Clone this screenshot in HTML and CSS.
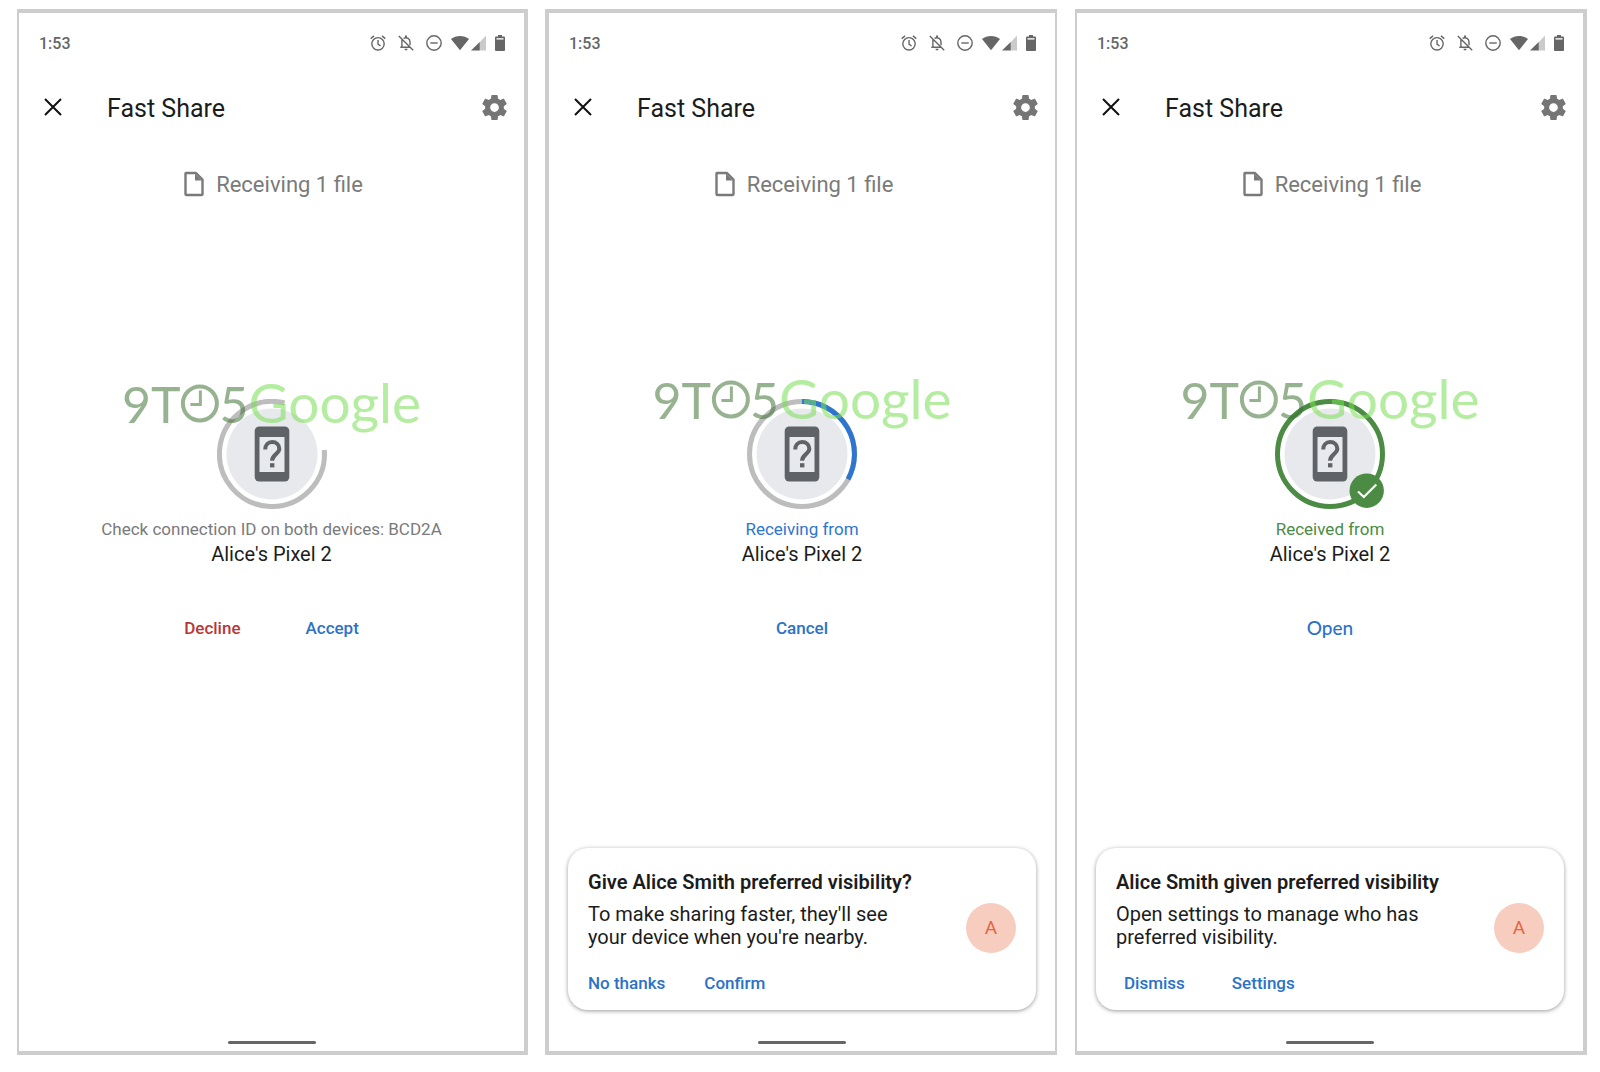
FILE: index.html
```html
<!DOCTYPE html>
<html lang="en">
<head>
<meta charset="utf-8">
<meta name="viewport" content="width=device-width, initial-scale=1">
<title>Fast Share</title>
<link rel="stylesheet" href="styles.css">
</head>
<body>
<svg class="sprite" aria-hidden="true">
  <symbol id="i-alarm" viewBox="0 0 16 16"><g fill="none" stroke="currentColor" stroke-width="1.4"><circle cx="8" cy="8.8" r="6.2"/><path d="M8 5v4.2l2.6 1.8M.7 3.6 4 .9M15.3 3.6 12 .9"/></g></symbol>
  <symbol id="i-bell-off" viewBox="0 0 16 16"><g fill="none" stroke="currentColor" stroke-width="1.4"><path d="M.8.9 15.2 15.3M3.900 4.800v7.500h8.200M2.300 12.300h10M5.600 3.400C9 1.600 12 3.800 12 7v3.200"/></g><path fill="currentColor" d="M7 .4h2v2.200H7zM6.400 13.800h3.200a1.600 1.600 0 0 1-3.200 0z"/></symbol>
  <symbol id="i-dnd" viewBox="0 0 16 16"><g fill="none" stroke="currentColor" stroke-width="1.400"><circle cx="8" cy="8" r="7.200"/><path d="M4.300 8h7.400"/></g></symbol>
  <symbol id="i-wifi" viewBox="0 0 18 16"><path fill="currentColor" d="M0 3.900C5 0 13 0 18 3.900L9 15.200z"/></symbol>
  <symbol id="i-signal" viewBox="0 0 15 16"><path fill="currentColor" opacity=".35" d="M15 .6v15H8v-7.600z"/><path fill="currentColor" d="M8.700 7v8.600H0z"/></symbol>
  <symbol id="i-battery" viewBox="0 0 10 16"><path fill="currentColor" d="M3 0h4v1.400H3zM1 1.400h8a1 1 0 0 1 1 1V15a1 1 0 0 1-1 1H1a1 1 0 0 1-1-1V2.400a1 1 0 0 1 1-1z"/><path fill="#ddd" d="M1.500 3h7v1.700h-7z"/></symbol>
  <symbol id="i-close" viewBox="0 0 24 24"><path fill="none" stroke="currentColor" stroke-width="2" d="M4 4l16 16M20 4 4 20"/></symbol>
  <symbol id="i-gear" viewBox="2 2 20 20"><path fill="currentColor" d="M19.430 12.980c.04-.32.07-.64.07-.98s-.03-.66-.07-.98l2.110-1.650c.19-.15.24-.42.12-.64l-2-3.460c-.12-.22-.39-.3-.61-.22l-2.490 1c-.52-.4-1.080-.73-1.690-.98l-.38-2.650C14.460 2.180 14.250 2 14 2h-4c-.25 0-.46.18-.49.42l-.38 2.650c-.61.25-1.170.59-1.690.98l-2.490-1c-.23-.09-.49 0-.61.22l-2 3.460c-.13.22-.07.49.12.64l2.110 1.650c-.04.32-.07.65-.07.98s.03.66.07.98l-2.110 1.650c-.19.15-.24.42-.12.64l2 3.460c.12.22.39.3.61.22l2.490-1c.52.4 1.080.73 1.690.98l.38 2.650c.03.24.24.42.49.42h4c.25 0 .46-.18.49-.42l.38-2.650c.61-.25 1.170-.59 1.690-.98l2.490 1c.23.09.49 0 .61-.22l2-3.460c.12-.22.07-.49-.12-.64l-2.110-1.650zM12 15.500c-1.930 0-3.500-1.570-3.500-3.500s1.570-3.500 3.500-3.500 3.500 1.570 3.500 3.500-1.570 3.500-3.500 3.500z"/></symbol>
  <symbol id="i-file" viewBox="0 0 26 26"><path fill="none" stroke="currentColor" stroke-width="2.400" stroke-linejoin="round" d="M6 2h10L22.500 8.500V23a1 1 0 0 1-1 1H6.500a1 1 0 0 1-1-1V2.500a.5.500 0 0 1 .5-.5z"/><path fill="currentColor" d="M15 2.500V9.500H22z"/></symbol>
  <symbol id="i-device" viewBox="0 0 110 110"><circle cx="55" cy="55" r="45.500" fill="#e8e9ed"/><rect x="37.700" y="27.500" width="34.600" height="55" rx="4.500" fill="#5f6367"/><path fill="#e8e9ed" d="M42.500 38h25v35h-25z"/><path fill="none" stroke="#5f6367" stroke-width="4" d="M48.200 50.500c0-4.500 3-7.500 6.900-7.500 4.200 0 7.200 2.900 7.200 6.800 0 5.200-7.200 5.600-7.200 12"/><path fill="#5f6367" d="M53 64.200h4.400v4.200H53z"/></symbol>
  <symbol id="i-clock" viewBox="0 0 39 39"><g fill="none" stroke="currentColor" stroke-width="4"><circle cx="19.500" cy="19.500" r="17"/><path stroke-width="3" d="M20 6.500V20.500H10"/></g></symbol>
</svg>

<main class="board">
  <section class="phone phone--first">
    <div class="status">
      <time>1:53</time>
      <div class="status__icons">
        <div class="status__alerts"><svg class="ic16"><use href="#i-alarm"/></svg><svg class="ic16"><use href="#i-bell-off"/></svg><svg class="ic16"><use href="#i-dnd"/></svg></div>
        <div class="status__radio"><svg class="ic-wifi"><use href="#i-wifi"/></svg><svg class="ic-signal"><use href="#i-signal"/></svg></div>
        <svg class="ic-battery"><use href="#i-battery"/></svg>
      </div>
    </div>
    <header class="bar">
      <button class="icon-btn" aria-label="Close"><svg class="ic-close"><use href="#i-close"/></svg></button>
      <h1>Fast Share</h1>
      <button class="icon-btn icon-btn--gear" aria-label="Settings"><svg class="ic-gear"><use href="#i-gear"/></svg></button>
    </header>
    <p class="summary"><svg class="ic-file"><use href="#i-file"/></svg>Receiving 1 file</p>
    <div class="device">
      <div class="avatar">
        <svg class="avatar__art" viewBox="0 0 110 110"><use href="#i-device"/><path fill="none" stroke="#bdbdbd" stroke-width="5" d="M107.300 51A52.500 52.500 0 1 1 67.600 4"/></svg>
        <div class="mark mark--low"><span class="mark__a">9T</span><svg class="mark__clock"><use href="#i-clock"/></svg><span class="mark__a">5</span><span class="mark__b">Google</span></div>
      </div>
      <p class="state">Check connection ID on both devices: BCD2A</p>
      <p class="name">Alice's Pixel 2</p>
      <div class="actions"><button class="text-btn text-btn--red">Decline</button><button class="text-btn">Accept</button></div>
    </div>
    <div class="home"></div>
  </section>

  <section class="phone phone--second">
    <div class="status">
      <time>1:53</time>
      <div class="status__icons">
        <div class="status__alerts"><svg class="ic16"><use href="#i-alarm"/></svg><svg class="ic16"><use href="#i-bell-off"/></svg><svg class="ic16"><use href="#i-dnd"/></svg></div>
        <div class="status__radio"><svg class="ic-wifi"><use href="#i-wifi"/></svg><svg class="ic-signal"><use href="#i-signal"/></svg></div>
        <svg class="ic-battery"><use href="#i-battery"/></svg>
      </div>
    </div>
    <header class="bar">
      <button class="icon-btn" aria-label="Close"><svg class="ic-close"><use href="#i-close"/></svg></button>
      <h1>Fast Share</h1>
      <button class="icon-btn icon-btn--gear" aria-label="Settings"><svg class="ic-gear"><use href="#i-gear"/></svg></button>
    </header>
    <p class="summary"><svg class="ic-file"><use href="#i-file"/></svg>Receiving 1 file</p>
    <div class="device">
      <div class="avatar">
        <svg class="avatar__art" viewBox="0 0 110 110"><use href="#i-device"/><circle cx="55" cy="55" r="52.500" fill="none" stroke="#bdbdbd" stroke-width="5"/><path fill="none" stroke="#2e75cf" stroke-width="5" d="M55 2.500A52.500 52.500 0 0 1 101 80.200"/></svg>
        <div class="mark"><span class="mark__a">9T</span><svg class="mark__clock"><use href="#i-clock"/></svg><span class="mark__a">5</span><span class="mark__b">Google</span></div>
      </div>
      <p class="state state--blue">Receiving from</p>
      <p class="name">Alice's Pixel 2</p>
      <div class="actions"><button class="text-btn">Cancel</button></div>
    </div>
    <article class="card">
      <h2>Give Alice Smith preferred visibility?</h2>
      <div class="card__body"><p>To make sharing faster, they'll see your device when you're nearby.</p><span class="initial">A</span></div>
      <div class="card__actions"><button class="text-btn">No thanks</button><button class="text-btn">Confirm</button></div>
    </article>
    <div class="home"></div>
  </section>

  <section class="phone phone--third">
    <div class="status">
      <time>1:53</time>
      <div class="status__icons">
        <div class="status__alerts"><svg class="ic16"><use href="#i-alarm"/></svg><svg class="ic16"><use href="#i-bell-off"/></svg><svg class="ic16"><use href="#i-dnd"/></svg></div>
        <div class="status__radio"><svg class="ic-wifi"><use href="#i-wifi"/></svg><svg class="ic-signal"><use href="#i-signal"/></svg></div>
        <svg class="ic-battery"><use href="#i-battery"/></svg>
      </div>
    </div>
    <header class="bar">
      <button class="icon-btn" aria-label="Close"><svg class="ic-close"><use href="#i-close"/></svg></button>
      <h1>Fast Share</h1>
      <button class="icon-btn icon-btn--gear" aria-label="Settings"><svg class="ic-gear"><use href="#i-gear"/></svg></button>
    </header>
    <p class="summary"><svg class="ic-file"><use href="#i-file"/></svg>Receiving 1 file</p>
    <div class="device">
      <div class="avatar">
        <svg class="avatar__art" viewBox="0 0 110 110"><use href="#i-device"/><circle cx="55" cy="55" r="52.500" fill="none" stroke="#4b8b43" stroke-width="5"/><circle cx="91.700" cy="91.700" r="17.200" fill="#4b8b43"/><path fill="none" stroke="#fff" stroke-width="2.200" d="M83 92.500l5.800 5.500 12.500-12.500"/></svg>
        <div class="mark"><span class="mark__a">9T</span><svg class="mark__clock"><use href="#i-clock"/></svg><span class="mark__a">5</span><span class="mark__b">Google</span></div>
      </div>
      <p class="state state--green">Received from</p>
      <p class="name">Alice's Pixel 2</p>
      <div class="actions"><button class="text-btn text-btn--open">Open</button></div>
    </div>
    <article class="card">
      <h2>Alice Smith given preferred visibility</h2>
      <div class="card__body"><p>Open settings to manage who has preferred visibility.</p><span class="initial">A</span></div>
      <div class="card__actions card__actions--inset"><button class="text-btn">Dismiss</button><button class="text-btn">Settings</button></div>
    </article>
    <div class="home"></div>
  </section>
</main>
</body>
</html>
```
FILE: styles.css
```css
* { box-sizing: border-box; }

body {
  margin: 0;
  background: #fff;
  color: #1c1c1c;
  font-family: Roboto, "Liberation Sans", sans-serif;
}

h1, h2, p { margin: 0; font-weight: 400; }
svg { display: block; flex: none; }
.sprite { position: absolute; width: 0; height: 0; }

button {
  margin: 0;
  padding: 0;
  border: 0;
  background: none;
  color: inherit;
  font: inherit;
  cursor: pointer;
}

.board {
  display: grid;
  grid-template-columns: 511fr 512fr 513fr;
  gap: 17px;
  min-height: 100vh;
  padding: 9px 13px 17px 17px;
}

.phone {
  display: flex;
  flex-direction: column;
  min-width: 0;
  border: 4px solid #cdcdcd;
}
.phone--first, .phone--third { border-left-width: 2px; }
.phone--second { border-right-width: 2px; }
.phone--third { margin-left: 1px; }

/* Status bar */
.status {
  display: flex;
  align-items: center;
  justify-content: space-between;
  height: 61px;
  padding: 0 19px 0 20px;
  color: #666;
  font-size: 16px;
  font-weight: 500;
}
.status__icons { display: flex; gap: 9px; padding-bottom: 2px; }
.status__alerts { display: flex; gap: 12px; }
.status__radio { display: flex; gap: 2px; }
.ic16 { width: 16px; height: 16px; }
.ic-wifi { width: 18px; height: 16px; }
.ic-signal { width: 15px; height: 16px; }
.ic-battery { width: 10px; height: 16px; }

/* Title bar */
.bar {
  display: flex;
  align-items: center;
  height: 66px;
  padding: 0 17px 0 22px;
}
.bar h1 {
  flex: 1;
  padding: 4px 0 0 42px;
  font-size: 25px;
  line-height: 32px;
}
.icon-btn { color: #111; }
.icon-btn--gear { color: #757575; }
.ic-close { width: 24px; height: 24px; }
.ic-gear { width: 25px; height: 25px; }

.summary {
  display: flex;
  align-items: center;
  justify-content: center;
  gap: 10px;
  padding-top: 31px;
  color: #7a7a7a;
  font-size: 22px;
  line-height: 28px;
}
.ic-file { width: 26px; height: 26px; margin-bottom: 2px; }

/* Sending device */
.device {
  display: flex;
  flex-direction: column;
  align-items: center;
  padding-top: 200px;
  text-align: center;
}
.avatar { position: relative; width: 110px; height: 110px; }
.avatar__art { width: 110px; height: 110px; }

.mark {
  position: absolute;
  top: -29px;
  left: 50%;
  display: flex;
  align-items: baseline;
  transform: translateX(-50%);
  font-family: Lato, sans-serif;
  font-weight: 400;
  line-height: 56px;
  white-space: nowrap;
}
.mark--low { top: -25px; }
.mark__a, .mark__clock { color: rgba(66, 115, 52, .55); font-size: 50px; }
.mark__b { color: rgba(120, 222, 82, .55); font-size: 55px; }
.mark__clock { width: 39px; height: 39px; }

.state {
  margin-top: 8px;
  color: #7a7a7a;
  font-size: 17px;
  line-height: 24px;
}
.state--blue { color: #2e75cf; }
.state--green { color: #4b8b43; }
.name { font-size: 20px; line-height: 26px; }

.actions {
  display: flex;
  gap: 33px;
  margin-top: 49px;
}
.actions .text-btn { padding: 0 16px; }
.text-btn {
  color: #2b72c8;
  font-size: 17px;
  font-weight: 500;
  line-height: 24px;
}
.text-btn--red { color: #b93636; }
.text-btn--open { font-family: Lato, sans-serif; font-size: 19px; }

/* Visibility prompt */
.card {
  margin: auto 19px 0;
  padding: 21px 20px 15px;
  border-radius: 20px;
  box-shadow: 0 1px 4px rgba(0, 0, 0, .4);
}
.card h2 {
  font-size: 20px;
  font-weight: 600;
  line-height: 26px;
}
.card__body {
  display: flex;
  align-items: flex-start;
  justify-content: space-between;
  padding-top: 8px;
}
.card__body p {
  max-width: 320px;
  font-size: 20px;
  line-height: 23px;
}
.initial {
  width: 50px;
  height: 50px;
  border-radius: 50%;
  background: #f7cdc0;
  color: #e8643c;
  font-size: 19px;
  line-height: 50px;
  text-align: center;
}
.card__actions {
  display: flex;
  gap: 39px;
  padding-top: 18px;
}
.card__actions--inset { gap: 47px; padding-left: 8px; }

.home {
  width: 88px;
  height: 3px;
  margin: 31px auto 7px;
  border-radius: 2px;
  background: #666;
}
.device + .home { margin-top: auto; }
```
